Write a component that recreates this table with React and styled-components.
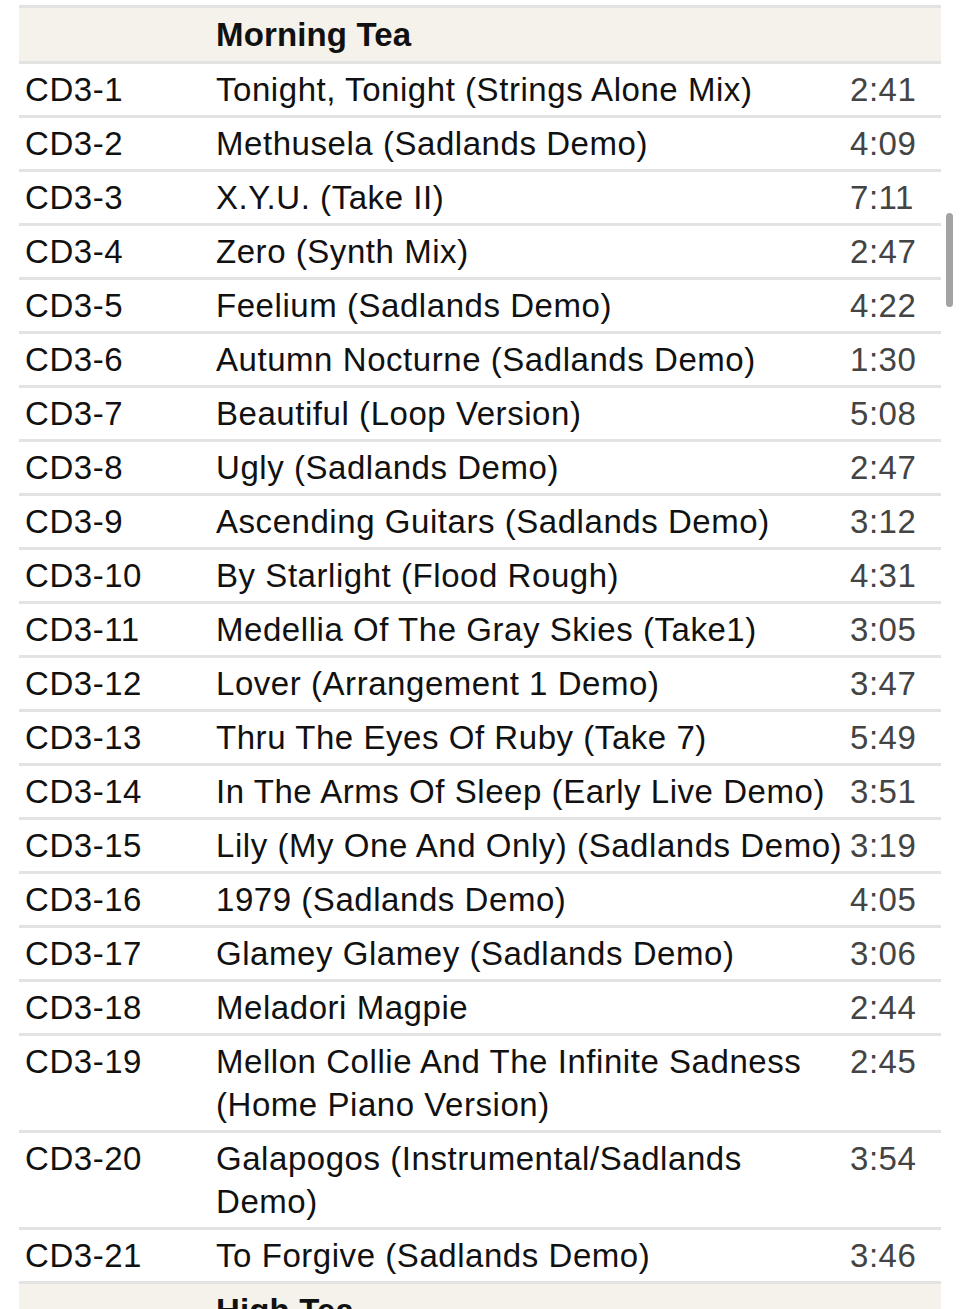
import styled, { createGlobalStyle } from "styled-components"

const Global = createGlobalStyle`
    html, body {
        margin: 0;
        padding: 0;
        background: #fff;
    }
    body {
        font-family: "Liberation Sans", Helvetica, Arial, sans-serif;
        -webkit-font-smoothing: antialiased;
    }
`;

const Page = styled.div`
    position: relative;
    width: 960px;
    height: 1309px;
    overflow: hidden;
    padding: 5px 0 0 19px;
    box-sizing: border-box;
`;

const List = styled.div`
    width: 922px;
    border-top: 3px solid #e3e3e3;
`;

const Row = styled.div`
    display: grid;
    grid-template-columns: 191px 634px 97px;
    padding: ${p => p.$head ? "5px 0" : "4px 0"};
    background: ${p => p.$head ? "#f4f2ea" : "#fff"};
    border-bottom: 3px solid #e3e3e3;
    font-size: 33px;
    line-height: 43px;
`;

const Cell = styled.div`
    padding: 0 6px;
    color: #111;
    font-weight: ${p => p.$bold ? "bold" : "normal"};
    letter-spacing: ${p => p.$bold ? "0.15px" : "0.55px"};
`;

const Title = styled(Cell)`
    padding-right: 0;
`;

const Time = styled(Cell)`
    color: #444;
`;

const Scrollbar = styled.div`
    position: absolute;
    left: 946px;
    top: 213px;
    width: 7px;
    height: 94px;
    border-radius: 4px;
    background: #a3a3a3;
`;

const tracks = [
    ["CD3-1", "Tonight, Tonight (Strings Alone Mix)", "2:41"],
    ["CD3-2", "Methusela (Sadlands Demo)", "4:09"],
    ["CD3-3", "X.Y.U. (Take II)", "7:11"],
    ["CD3-4", "Zero (Synth Mix)", "2:47"],
    ["CD3-5", "Feelium (Sadlands Demo)", "4:22"],
    ["CD3-6", "Autumn Nocturne (Sadlands Demo)", "1:30"],
    ["CD3-7", "Beautiful (Loop Version)", "5:08"],
    ["CD3-8", "Ugly (Sadlands Demo)", "2:47"],
    ["CD3-9", "Ascending Guitars (Sadlands Demo)", "3:12"],
    ["CD3-10", "By Starlight (Flood Rough)", "4:31"],
    ["CD3-11", "Medellia Of The Gray Skies (Take1)", "3:05"],
    ["CD3-12", "Lover (Arrangement 1 Demo)", "3:47"],
    ["CD3-13", "Thru The Eyes Of Ruby (Take 7)", "5:49"],
    ["CD3-14", "In The Arms Of Sleep (Early Live Demo)", "3:51"],
    ["CD3-15", "Lily (My One And Only) (Sadlands Demo)", "3:19"],
    ["CD3-16", "1979 (Sadlands Demo)", "4:05"],
    ["CD3-17", "Glamey Glamey (Sadlands Demo)", "3:06"],
    ["CD3-18", "Meladori Magpie", "2:44"],
    ["CD3-19", "Mellon Collie And The Infinite Sadness (Home Piano Version)", "2:45"],
    ["CD3-20", "Galapogos (Instrumental/Sadlands Demo)", "3:54"],
    ["CD3-21", "To Forgive (Sadlands Demo)", "3:46"],
];

function Heading({children}){
    return(
        <Row $head>
            <Cell />
            <Title $bold>{children}</Title>
            <Cell />
        </Row>
    )
}

export default function App(){
    return(
        <Page>
            <Global />
            <List>
                <Heading>Morning Tea</Heading>
                {tracks.map(([pos, title, len]) => (
                    <Row key={pos}>
                        <Cell>{pos}</Cell>
                        <Title>{title}</Title>
                        <Time>{len}</Time>
                    </Row>
                ))}
                <Heading>High Tea</Heading>
            </List>
            <Scrollbar />
        </Page>
    )
}
